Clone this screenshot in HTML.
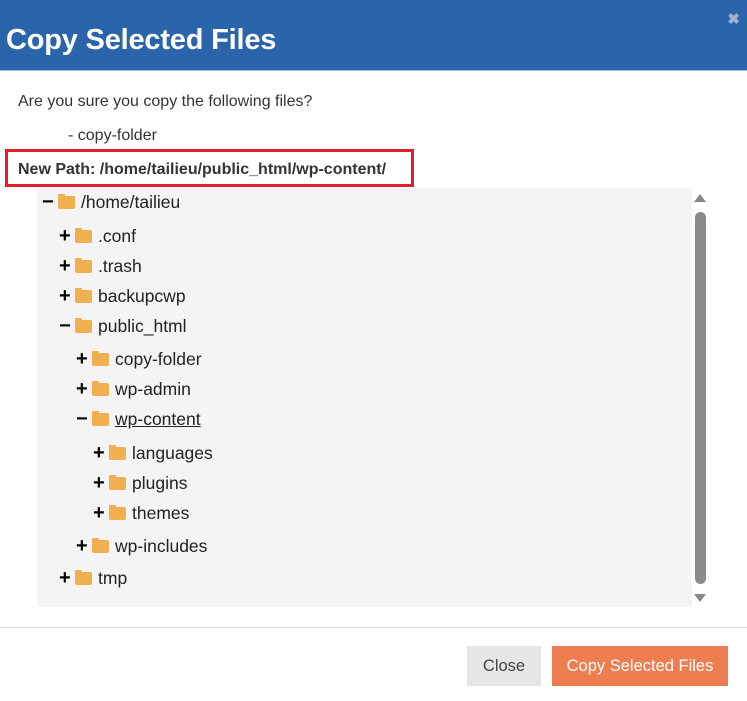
<html><head><style>
body{margin:0;width:747px;height:701px;background:#fff;font-family:"Liberation Sans",sans-serif;position:relative;overflow:hidden}
.hd{position:absolute;left:0;top:0;width:747px;height:70px;background:#2a65ab;border-bottom:1px solid #9fb6d6}
.hd h1{position:absolute;left:6px;top:21px;margin:0;font-size:29px;color:#fff;font-weight:bold;line-height:38px;letter-spacing:-0.2px}
.x{position:absolute;right:7px;top:10px;color:#9fb2cc;font-size:15px;font-weight:bold}
.t{position:absolute;color:#333;font-size:16px}
.box{position:absolute;left:37px;top:188px;width:655px;height:419px;background:#f4f4f4}
.r{position:absolute;font-size:17.5px;color:#222;line-height:20px;white-space:nowrap}
.r b{display:inline-block;width:16px;font-size:20px;color:#000;font-weight:900}
.f{display:inline-block;width:17px;height:13px;background:#f0b050;border-radius:2px;vertical-align:-1px;margin-right:6px;position:relative}
.f:before{content:"";position:absolute;left:0;top:-2px;width:7px;height:3px;background:#f0b050;border-radius:1px 1px 0 0}
.btn{position:absolute;top:646px;height:40px;line-height:40px;text-align:center;font-size:16.5px}
</style></head><body>
<div class="hd"><h1>Copy Selected Files</h1><div class="x">✖</div></div>
<div class="t" style="left:18px;top:93px">Are you sure you copy the following files?</div>
<div class="t" style="left:68px;top:127px">- copy-folder</div>
<div style="position:absolute;left:5px;top:149px;width:409px;height:38px;border:3px solid #e0202a;box-sizing:border-box"></div>
<div class="t" style="left:18px;top:161px;font-weight:bold;color:#333">New Path: /home/tailieu/public_html/wp-content/</div>
<div class="box"></div>
<div style="position:absolute;left:695px;top:212px;width:11px;height:372px;background:#8a8a8a;border-radius:6px"></div>
<div style="position:absolute;left:694px;top:194px;border:6px solid transparent;border-bottom:8px solid #888;border-top:0"></div>
<div style="position:absolute;left:694px;top:594px;border:6px solid transparent;border-top:8px solid #888;border-bottom:0"></div>
<div class="r" style="left:42px;top:192px"><b>−</b><span class="f"></span>/home/tailieu</div>
<div class="r" style="left:59px;top:226px"><b>+</b><span class="f"></span>.conf</div>
<div class="r" style="left:59px;top:256px"><b>+</b><span class="f"></span>.trash</div>
<div class="r" style="left:59px;top:286px"><b>+</b><span class="f"></span>backupcwp</div>
<div class="r" style="left:59px;top:316px"><b>−</b><span class="f"></span>public_html</div>
<div class="r" style="left:76px;top:349px"><b>+</b><span class="f"></span>copy-folder</div>
<div class="r" style="left:76px;top:379px"><b>+</b><span class="f"></span>wp-admin</div>
<div class="r" style="left:76px;top:409px"><b>−</b><span class="f"></span><u>wp-content</u></div>
<div class="r" style="left:93px;top:443px"><b>+</b><span class="f"></span>languages</div>
<div class="r" style="left:93px;top:473px"><b>+</b><span class="f"></span>plugins</div>
<div class="r" style="left:93px;top:503px"><b>+</b><span class="f"></span>themes</div>
<div class="r" style="left:76px;top:536px"><b>+</b><span class="f"></span>wp-includes</div>
<div class="r" style="left:59px;top:568px"><b>+</b><span class="f"></span>tmp</div>
<div style="position:absolute;left:0;top:627px;width:747px;height:1px;background:#ddd"></div>
<div class="btn" style="left:467px;width:74px;background:#e6e6e6;color:#444">Close</div>
<div class="btn" style="left:552px;width:176px;background:#ee7e50;color:#fff">Copy Selected Files</div>
</body></html>
